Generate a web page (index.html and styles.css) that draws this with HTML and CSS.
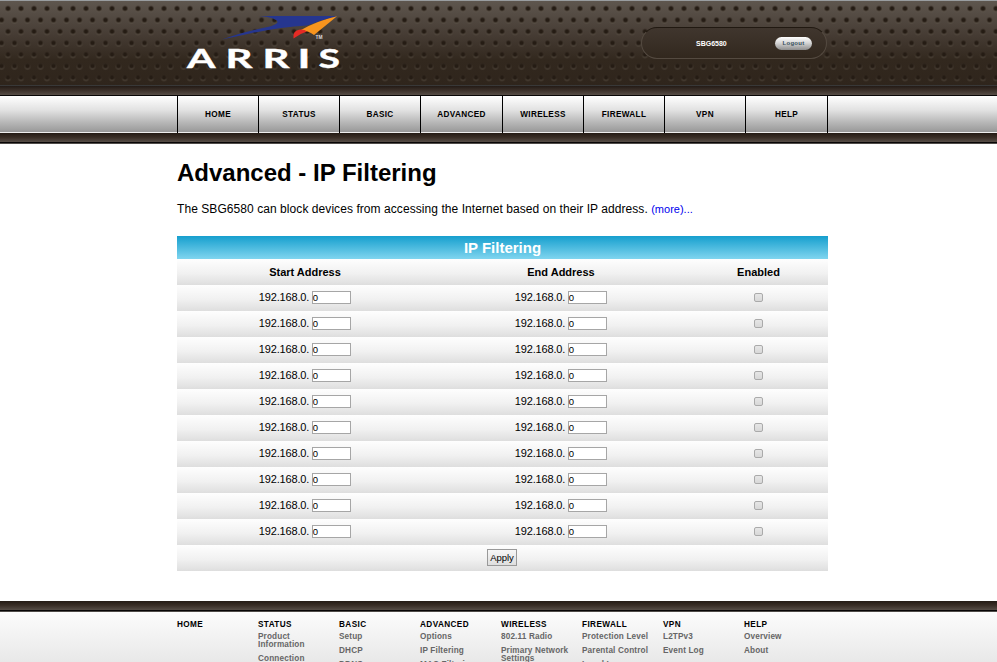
FILE: index.html
```html
<!DOCTYPE html>
<html lang="en">
<head>
<meta charset="utf-8">
<title>Advanced - IP Filtering</title>
<link rel="stylesheet" href="styles.css">
</head>
<body>
<header class="header">
  <svg class="perforation" width="100%" height="84" aria-hidden="true">
    <defs>
      <radialGradient id="hole"><stop offset=".7" stop-color="#251c14"/><stop offset="1" stop-color="#30271f"/></radialGradient>
      <pattern id="dots" width="13" height="23" patternUnits="userSpaceOnUse" x="1.5" y="1.5">
        <circle cx="6.5" cy="6.8" r="2.7" fill="#645a4e" opacity=".65"/>
        <circle cx="6.5" cy="6" r="2.5" fill="url(#hole)"/>
        <circle cx="0" cy="18.3" r="2.7" fill="#645a4e" opacity=".65"/>
        <circle cx="0" cy="17.5" r="2.5" fill="url(#hole)"/>
        <circle cx="13" cy="18.3" r="2.7" fill="#645a4e" opacity=".65"/>
        <circle cx="13" cy="17.5" r="2.5" fill="url(#hole)"/>
      </pattern>
    </defs>
    <rect width="100%" height="82" fill="url(#dots)"/>
  </svg>
  <div class="wrap brand">
    <svg class="logo" width="163" height="70" viewBox="180 8 163 70" role="img" aria-label="ARRIS">
      <path d="M222 39.5C240 33 257 29 271 26.200Q283 22.500 273 18.5Q267 16.4 259 16L337 16Q322 20 307 25.500Q280 27 250 33.500Z" fill="#26368f"/>
      <path d="M337 16.3L314 35Q309 31 301 30Q317 21 337 16.3Z" fill="#f7941e"/>
      <path d="M293.500 38.500Q292.500 31 299 29.800Q304 29 307 31.500Q300 33.500 293.500 38.500Z" fill="#e52b25"/>
      <text class="tm" x="315.500" y="39" textLength="7" lengthAdjust="spacingAndGlyphs">TM</text>
      <g class="letters">
        <text x="187" y="68.300" textLength="28.500" lengthAdjust="spacingAndGlyphs">A</text>
        <text x="225.500" y="68.300" textLength="27" lengthAdjust="spacingAndGlyphs">R</text>
        <text x="262.500" y="68.300" textLength="27" lengthAdjust="spacingAndGlyphs">R</text>
        <text x="297.500" y="68.300" textLength="13" lengthAdjust="spacingAndGlyphs">I</text>
        <text x="318.500" y="68.300" textLength="21.500" lengthAdjust="spacingAndGlyphs">S</text>
      </g>
    </svg>
    <div class="session"><b class="model">SBG6580</b><span class="logout">Logout</span></div>
  </div>
</header>
<div class="stripe top"></div>
<nav class="nav"><ul class="wrap menu"><li>HOME</li><li>STATUS</li><li>BASIC</li><li>ADVANCED</li><li>WIRELESS</li><li>FIREWALL</li><li>VPN</li><li>HELP</li></ul></nav>
<div class="stripe"></div>
<main class="wrap main">
  <h1>Advanced - IP Filtering</h1>
  <p class="intro"><span class="sentence">The SBG6580 can block devices from accessing the Internet based on their IP address.</span> <a class="more">(more)...</a></p>
  <div class="table">
    <div class="caption">IP Filtering</div>
    <div class="row head"><span>Start Address</span><span>End Address</span><span>Enabled</span></div>
    <div class="row"><span>192.168.0.<i class="field">0</i></span><span>192.168.0.<i class="field">0</i></span><span><i class="check"></i></span></div>
    <div class="row"><span>192.168.0.<i class="field">0</i></span><span>192.168.0.<i class="field">0</i></span><span><i class="check"></i></span></div>
    <div class="row"><span>192.168.0.<i class="field">0</i></span><span>192.168.0.<i class="field">0</i></span><span><i class="check"></i></span></div>
    <div class="row"><span>192.168.0.<i class="field">0</i></span><span>192.168.0.<i class="field">0</i></span><span><i class="check"></i></span></div>
    <div class="row"><span>192.168.0.<i class="field">0</i></span><span>192.168.0.<i class="field">0</i></span><span><i class="check"></i></span></div>
    <div class="row"><span>192.168.0.<i class="field">0</i></span><span>192.168.0.<i class="field">0</i></span><span><i class="check"></i></span></div>
    <div class="row"><span>192.168.0.<i class="field">0</i></span><span>192.168.0.<i class="field">0</i></span><span><i class="check"></i></span></div>
    <div class="row"><span>192.168.0.<i class="field">0</i></span><span>192.168.0.<i class="field">0</i></span><span><i class="check"></i></span></div>
    <div class="row"><span>192.168.0.<i class="field">0</i></span><span>192.168.0.<i class="field">0</i></span><span><i class="check"></i></span></div>
    <div class="row"><span>192.168.0.<i class="field">0</i></span><span>192.168.0.<i class="field">0</i></span><span><i class="check"></i></span></div>
    <div class="row submit"><button>Apply</button></div>
  </div>
</main>
<div class="stripe"></div>
<footer class="footer">
  <div class="wrap sitemap">
    <div><h2>HOME</h2></div>
    <div><h2>STATUS</h2><p>Product<br>Information</p><p>Connection</p></div>
    <div><h2>BASIC</h2><p>Setup</p><p>DHCP</p><p>DDNS</p></div>
    <div><h2>ADVANCED</h2><p>Options</p><p>IP Filtering</p><p>MAC Filtering</p></div>
    <div><h2>WIRELESS</h2><p>802.11 Radio</p><p>Primary Network<br>Settings</p></div>
    <div><h2>FIREWALL</h2><p>Protection Level</p><p>Parental Control</p><p>Local Log</p></div>
    <div><h2>VPN</h2><p>L2TPv3</p><p>Event Log</p></div>
    <div><h2>HELP</h2><p>Overview</p><p>About</p></div>
  </div>
</footer>
</body>
</html>
```
FILE: styles.css
```css
* { box-sizing: border-box; }
body {
  margin: 0;
  height: 662px;
  overflow: hidden;
  display: flex;
  flex-direction: column;
  background: #fff;
  color: #000;
  font-family: "Liberation Sans", Arial, sans-serif;
}
.wrap { width: 651px; margin-left: 177px; }
.header {
  position: relative;
  flex: none;
  height: 86px;
  border-top: 1px solid #999da0;
  border-bottom: 1px solid #383838;
  background: linear-gradient(#5e564e, #463c34 40%, #32281e 70%, #2f251c);
}
.perforation { position: absolute; left: 0; top: 0; }
.brand { position: relative; display: flex; justify-content: space-between; padding-top: 7px; }
.logo { margin-left: 3px; }
.letters { font: 700 27px Lato, sans-serif; fill: #fff; stroke: #fff; stroke-width: .4px; }
.tm { font: 700 4.500px "Liberation Sans", sans-serif; fill: #ddd; }
.session {
  display: flex;
  align-items: center;
  width: 186px;
  height: 32px;
  margin: 19px 1px 0 0;
  padding: 0 14px 0 54px;
  justify-content: space-between;
  border-radius: 16px;
  border: 1px solid #544a40;
  border-top-color: #211911;
  background: linear-gradient(#40362e, #32281e);
}
.model { font-size: 7px; color: #fff; }
.logout {
  width: 37px;
  height: 13px;
  flex: none;
  border-radius: 7px;
  background: linear-gradient(#fff, #d6d6d6 45%, #8d8d8d);
  font: bold 6px/13px "Liberation Sans", sans-serif;
  letter-spacing: .25px;
  text-align: center;
  color: #38505c;
}
.stripe {
  flex: none;
  height: 11px;
  border-bottom: 1px solid #504c49;
  background: linear-gradient(#241b14, #3a2f27 45%, #564d46 9px, #080606 9px);
}
.stripe.top { height: 10px; border-bottom-color: #080606; background: linear-gradient(#241b16, #3a2f28 45%, #564d46); }
.nav { flex: none; height: 37px; border-bottom: 1px solid #eee; background: linear-gradient(#fff, #e1e1e1 40%, #b5b5b5 75%, #989898); }
.menu { display: grid; grid-template-columns: 81px 81px 81px 82px 81px 81px 81px 82px; height: 37px; margin-top: 0; margin-bottom: 0; padding: 0; list-style: none; border-left: 1px solid #000; }
.menu li { border-right: 1px solid #000; font: bold 8.2px/38px "Liberation Sans", sans-serif; letter-spacing: .35px; text-align: center; }
.main { flex: none; height: 457px; }
h1 { margin: 14px 0 0; font-size: 24px; line-height: 30px; }
.intro { margin: 14px 0 0; font-size: 12px; line-height: 14px; white-space: nowrap; }
.sentence { letter-spacing: .065px; }
.more { color: #00e; font-size: 11px; }
.table { margin-top: 20px; }
.caption { height: 23px; background: linear-gradient(#169fce, #80d5ef); color: #fff; font: bold 15px/23px "Liberation Sans", sans-serif; text-align: center; }
.row { display: grid; grid-template-columns: 256px 256px 139px; height: 26px; background: linear-gradient(#fefefe, #f1f1f1 55%, #dedede); font-size: 11px; line-height: 14px; letter-spacing: -.15px; }
.row span { display: flex; align-items: center; justify-content: center; padding-bottom: 2px; }
.row .field, .row .check { position: relative; top: .5px; }
.row.head { font-weight: bold; letter-spacing: 0; }
.row.head span { padding-bottom: 0; }
.field { width: 39px; height: 13px; margin: 0 .5px 0 2.500px; border: 1px solid #a6a6a6; background: #fff; font: normal 9.5px/11px "Liberation Sans", sans-serif; letter-spacing: 0; }
.check { width: 9px; height: 9px; border: 1px solid #aaa; border-radius: 2px; background: linear-gradient(#e6e6e6, #d8d8d8); }
.submit { display: flex; align-items: center; justify-content: center; padding-right: 1px; }
button { width: 30px; height: 17px; margin: 0 0 1px; padding: 0; border: 1px solid #999; border-radius: 0; background: linear-gradient(#f7f7f7, #dedede); color: #000; font: 9.5px/14px "Liberation Sans", sans-serif; letter-spacing: -.1px; }
.footer { flex: none; height: 50px; overflow: hidden; background: linear-gradient(#fcfcfc, #e8e8e8); }
.sitemap { display: grid; grid-template-columns: repeat(8, 81px); }
.sitemap div { white-space: nowrap; }
h2 { margin: 8px 0 3px; font-size: 8.2px; line-height: 10px; letter-spacing: .4px; }
.sitemap p { margin: 0 0 6px; font: bold 8.2px/8px "Liberation Sans", sans-serif; letter-spacing: .15px; color: #666; }
```
